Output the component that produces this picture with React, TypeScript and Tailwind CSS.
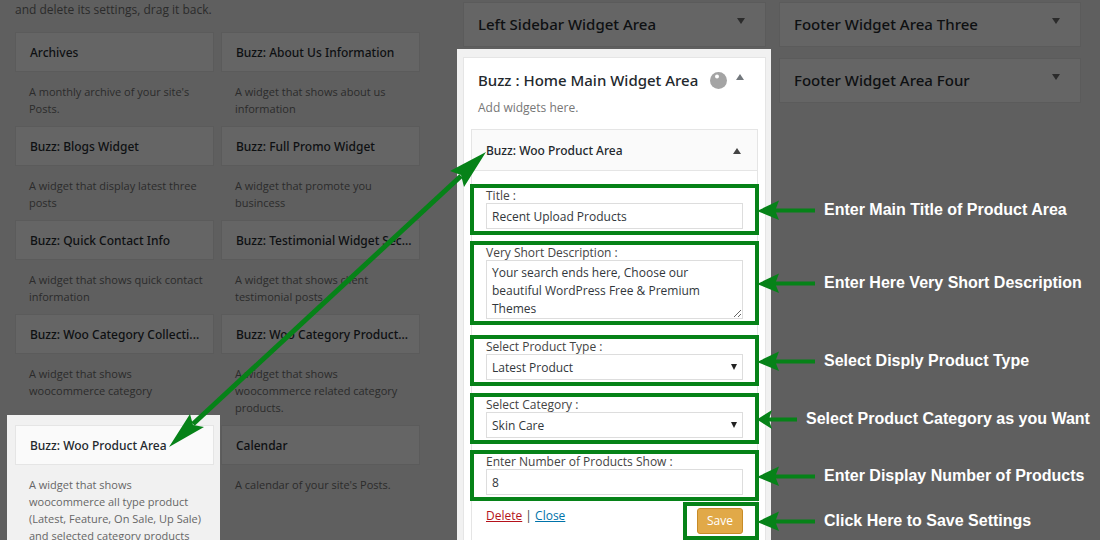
import React from "react";

type Widget = { title: string; text: string; active?: boolean };

const widgets: Widget[] = [
  { title: "Archives", text: "A monthly archive of your site's\nPosts." },
  { title: "Buzz: About Us Information", text: "A widget that shows about us\ninformation" },
  { title: "Buzz: Blogs Widget", text: "A widget that display latest three\nposts" },
  { title: "Buzz: Full Promo Widget", text: "A widget that promote you\nbusincess" },
  { title: "Buzz: Quick Contact Info", text: "A widget that shows quick contact\ninformation" },
  { title: "Buzz: Testimonial Widget Sec...", text: "A widget that shows client\ntestimonial posts" },
  { title: "Buzz: Woo Category Collecti...", text: "A widget that shows\nwoocommerce category" },
  { title: "Buzz: Woo Category Product...", text: "A widget that shows\nwoocommerce related category\nproducts." },
  {
    title: "Buzz: Woo Product Area",
    text: "A widget that shows\nwoocommerce all type product\n(Latest, Feature, On Sale, Up Sale)\nand selected category products",
    active: true,
  },
  { title: "Calendar", text: "A calendar of your site's Posts." },
];

function WidgetCard({ title, text, active }: Widget) {
  return (
    <article className="relative">
      {active && <div className="absolute -top-2.5 -right-1.5 -left-2 h-screen bg-[#f1f1f1]" />}
      <h3
        className={`relative h-10 border pl-3.5 font-['Noto_Sans',sans-serif] text-[12px] leading-[40px] font-medium whitespace-nowrap ${
          active ? "border-[#e5e5e5] bg-[#fafafa] text-[#23282d]" : "border-[#5b5b5b] bg-[#656565] text-[#0e1012]"
        }`}
      >
        {title}
      </h3>
      <p className={`relative pt-[11px] pb-[9px] pl-3.5 text-[11px] leading-[17px] whitespace-pre-line ${active ? "text-[#666]" : "text-[#2b2b2b]"}`}>
        {text}
      </p>
    </article>
  );
}

function AreaHeader({ title }: { title: string }) {
  return (
    <section className="flex h-[45px] justify-between border border-[#5b5b5b] bg-[#656565] pr-5 pl-3.5">
      <h2 className="font-['Noto_Sans',sans-serif] text-[15px] leading-[43px] font-medium text-[#0e1012]">{title}</h2>
      <Caret className="mt-[15px] text-[#2b2b2b]" />
    </section>
  );
}

function Caret({ up, className }: { up?: boolean; className: string }) {
  return (
    <svg className={`h-1.5 w-2 shrink-0 ${className}`} viewBox="0 0 8 6" fill="currentColor" aria-hidden="true">
      <path d={up ? "M0 6 4 0l4 6z" : "M0 0h8L4 6z"} />
    </svg>
  );
}

function Callout({ text, short }: { text: string; short?: boolean }) {
  return (
    <div className="absolute top-1/2 left-full ml-0.5 flex -translate-y-1/2 items-center gap-[9px] whitespace-nowrap">
      <svg className={short ? "h-5 w-10" : "h-5 w-[58px]"} viewBox={short ? "0 0 40 20" : "0 0 58 20"} fill="#068218" aria-hidden="true">
        <path d={short ? "M0 10.500 15 1 12.500 8.500H40V12.500H12.500L15 20z" : "M0 11 22 0.500 19 8.500H58V12.500H19L22 20z"} />
      </svg>
      <span className="font-['Liberation_Sans',Arial,sans-serif] text-[16px] font-bold text-white">{text}</span>
    </div>
  );
}

function Field({
  id,
  label,
  note,
  short,
  className,
  children,
}: {
  id: string;
  label: string;
  note: string;
  short?: boolean;
  className: string;
  children: React.ReactNode;
}) {
  return (
    <div className={`relative -mx-0.5 border-4 border-[#068218] px-3 pb-0.5 ${className}`}>
      <label htmlFor={id} className="block text-[12px] leading-[15px] text-[#444]">
        {label}
      </label>
      {children}
      <Callout text={note} short={short} />
    </div>
  );
}

const control = "block w-full border border-[#ddd] bg-white px-[5px] text-[#32373c] outline-none text-[12px]";

function SelectBox({ id, options }: { id: string; options: string[] }) {
  return (
    <div className="relative">
      <select id={id} className={`${control} h-[26px] appearance-none pt-0.5`}>
        {options.map((o) => (
          <option key={o}>{o}</option>
        ))}
      </select>
      <svg className="pointer-events-none absolute top-2.5 right-1.5 h-1.5 w-1.5" viewBox="0 0 6 6" fill="#222" aria-hidden="true">
        <path d="M0 0h6L3 6z" />
      </svg>
    </div>
  );
}

export default function App() {
  return (
    <main className="relative grid h-screen grid-cols-[minmax(0,457fr)_minmax(0,314fr)_minmax(0,329fr)] overflow-hidden bg-[#5f5f5f] font-['Open_Sans','Noto_Sans',sans-serif]">
      <section className="pr-[37px] pl-[15px]">
        <p className="pt-px pb-3.5 text-[12px] leading-[17px] text-[#2b2b2b]">and delete its settings, drag it back.</p>
        <div className="grid grid-cols-2 gap-x-[7px]">
          {widgets.map((w) => (
            <WidgetCard key={w.title} {...w} />
          ))}
        </div>
      </section>

      <section className="z-10 flex h-screen flex-col">
        <div className="pt-0.5 pr-[5px] pb-0.5 pl-1.5">
          <AreaHeader title="Left Sidebar Widget Area" />
        </div>
        <div className="flex-1 bg-[#f1f1f1] pt-2 pr-[5px] pl-1.5">
          <div className="h-full border border-[#e5e5e5] bg-white px-[7px]">
            <header className="flex h-[46px] px-[7px]">
              <h2 className="font-['Noto_Sans',sans-serif] text-[15px] leading-[45px] font-medium whitespace-nowrap text-[#23282d]">
                Buzz : Home Main Widget Area
              </h2>
              <svg className="mt-3.5 ml-auto h-[17px] w-[17px] shrink-0" viewBox="0 0 17 17" aria-hidden="true">
                <circle cx="8.500" cy="8.500" r="8.500" fill="#a4a4a4" />
                <circle cx="7" cy="4.500" r="2" fill="#fff" />
              </svg>
              <Caret up className="mt-4 mr-[7px] ml-[9px] text-[#72777c]" />
            </header>
            <p className="px-[7px] pb-[17px] text-[12px] leading-[8px] text-[#777]">Add widgets here.</p>
            <div className="border border-[#e5e5e5]">
              <h3 className="flex h-[41px] items-center justify-between border-b border-[#e5e5e5] bg-[#fafafa] pt-px pr-4 pl-3.5 font-['Noto_Sans',sans-serif] text-[12px] font-medium text-[#23282d]">
                Buzz: Woo Product Area
                <Caret up className="text-[#444]" />
              </h3>
              <form className="pt-[13px]" onSubmit={(e) => e.preventDefault()}>
                <Field id="title" label="Title :" note="Enter Main Title of Product Area" className="mt-0">
                  <input id="title" type="text" defaultValue="Recent Upload Products" className={`${control} h-[26px]`} />
                </Field>
                <Field id="desc" label="Very Short Description :" note="Enter Here Very Short Description" className="mt-1.5">
                  <textarea
                    id="desc"
                    defaultValue="Your search ends here, Choose our beautiful WordPress Free & Premium Themes"
                    className={`${control} h-[59px] resize overflow-hidden pt-[3px] leading-[18px]`}
                  />
                </Field>
                <Field id="type" label="Select Product Type :" note="Select Disply Product Type" className="mt-2.5">
                  <SelectBox id="type" options={["Latest Product"]} />
                </Field>
                <Field id="category" label="Select Category :" note="Select Product Category as you Want" short className="mt-[7px]">
                  <SelectBox id="category" options={["Skin Care"]} />
                </Field>
                <Field id="count" label="Enter Number of Products Show :" note="Enter Display Number of Products" className="mt-1.5">
                  <input id="count" type="text" defaultValue="8" className={`${control} h-[26px]`} />
                </Field>
                <div className="-mr-0.5 flex justify-between pt-px pl-3.5">
                  <p className="pt-[5px] text-[12px] leading-[17px] text-[#444]">
                    <a href="#delete" className="text-[#b5121b] underline">Delete</a> |{" "}
                    <a href="#close" className="text-[#0073aa] underline">Close</a>
                  </p>
                  <div className="relative border-4 border-[#068218] py-0.5 pr-3 pl-2.5">
                    <button type="submit" className="block h-[26px] w-[46px] rounded-[3px] border border-[#c78b27] bg-[#e1a948] text-[12px] text-white">
                      Save
                    </button>
                    <Callout text="Click Here to Save Settings" />
                  </div>
                </div>
              </form>
            </div>
          </div>
        </div>
      </section>

      <aside className="flex flex-col gap-[11px] pt-0.5 pr-[19px] pl-2">
        <AreaHeader title="Footer Widget Area Three" />
        <AreaHeader title="Footer Widget Area Four" />
      </aside>

      <svg className="pointer-events-none absolute top-[150px] left-[168px] z-20 h-[300px] w-[320px]" viewBox="168 150 320 300" fill="#068218" aria-hidden="true">
        <path d="M193 424 461 176" stroke="#068218" strokeWidth="5" />
        <path d="M169 447 190 414 193 425 204 427z" />
        <path d="M486 152 450 171 461 175 464 187z" />
      </svg>
    </main>
  );
}
